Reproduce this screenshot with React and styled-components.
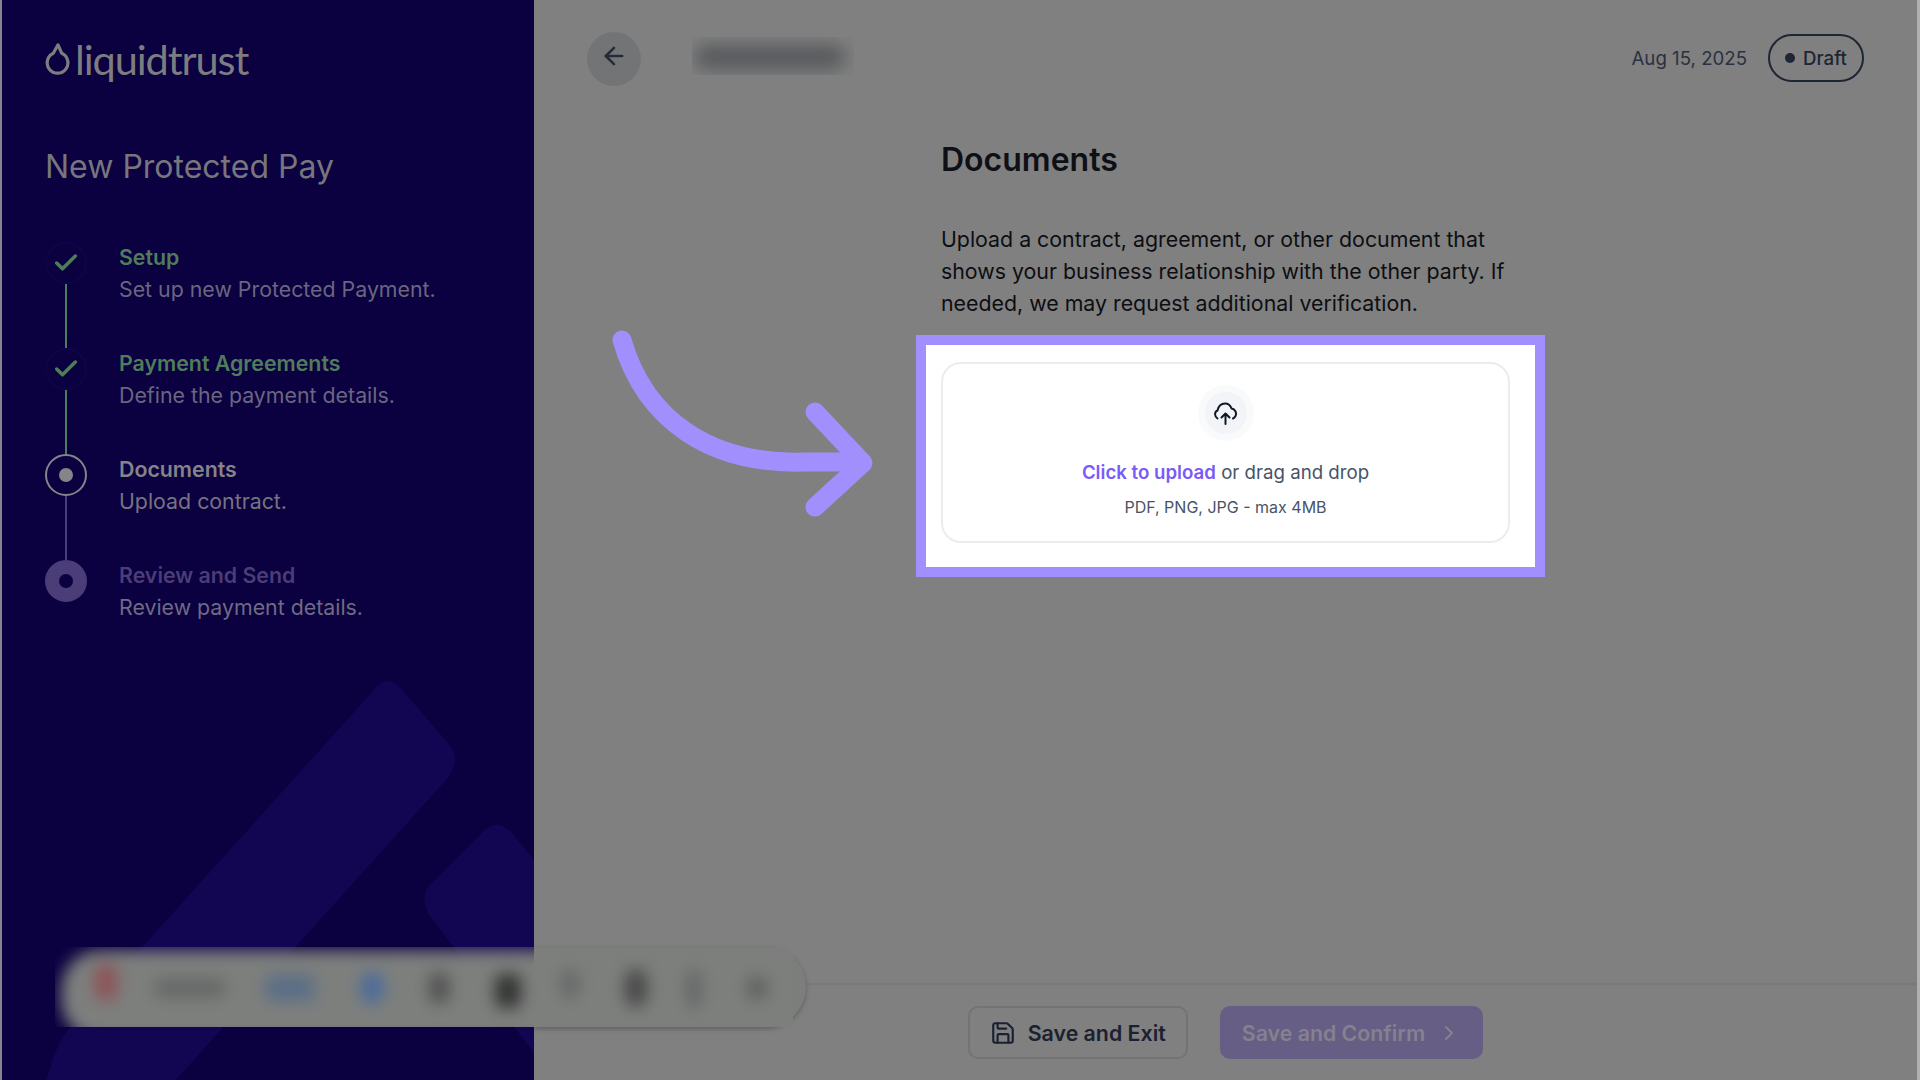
import React from 'react'
import styled, { createGlobalStyle } from 'styled-components'
import { ArrowLeft, Check, ChevronRight, Save } from 'lucide-react'

const GlobalStyle = createGlobalStyle`
  html, body {
    margin: 0;
    padding: 0;
    background: #808080;
    font-family: Inter, "Liberation Sans", sans-serif;
    overflow: hidden;
  }
  * { box-sizing: border-box; }
`

const UI = {
  Page: styled.div`
    position: relative;
    display: flex;
    width: 1920px;
    height: 1080px;
    border-left: 2px solid #85858c;
    border-right: 3px solid #b0b0b0;
    overflow: hidden;
    background: #808080;
  `,
  Sidebar: styled.aside`
    position: relative;
    flex: 0 0 532px;
    height: 100%;
    padding: 36px 0 0 43px;
    background: #0b0040;
    overflow: hidden;
  `,
  Shapes: styled.svg`
    position: absolute;
    left: -2px;
    top: 0;
  `,
  Logo: styled.div`
    position: relative;
    display: flex;
    align-items: center;
    gap: 3px;
    height: 46px;
    color: #7d7d7f;
    font-family: Lato, sans-serif;
    font-size: 41.5px;
    font-weight: 400;
    letter-spacing: -1.1px;
  `,
  SideTitle: styled.h2`
    position: relative;
    margin: 65px 0 0;
    color: #76767c;
    font-size: 32px;
    line-height: 40px;
    font-weight: 400;
  `,
  Steps: styled.div`
    position: relative;
    display: flex;
    flex-direction: column;
    margin-top: 55px;
  `,
  Step: styled.div`
    display: flex;
    gap: 32px;
    height: 106px;
  `,
  Marker: styled.div`
    display: flex;
    flex: 0 0 42px;
    flex-direction: column;
    align-items: center;
  `,
  Circle: styled.div`
    display: flex;
    flex: 0 0 42px;
    width: 42px;
    align-items: center;
    justify-content: center;
    border-radius: 50%;
    border: 2px solid ${p => p.$ring};
    background: ${p => p.$fill};
    color: #4f7d5c;
  `,
  Dot: styled.div`
    width: 14px;
    height: 14px;
    border-radius: 50%;
    background: ${p => p.$color};
  `,
  Connector: styled.div`
    flex: 1;
    width: 2px;
    background: ${p => p.$color};
  `,
  StepText: styled.div`
    margin-top: -1px;
  `,
  StepTitle: styled.div`
    color: ${p => p.$color};
    font-size: 21.33px;
    line-height: 32px;
    font-weight: 600;
  `,
  StepDesc: styled.div`
    color: ${p => p.$color};
    font-size: 21.33px;
    line-height: 32px;
    font-weight: 400;
  `,
  Main: styled.main`
    display: flex;
    flex: 1;
    flex-direction: column;
    height: 100%;
  `,
  Header: styled.header`
    display: flex;
    flex: 0 0 116px;
    align-items: flex-start;
    padding: 32px 53px 0 53px;
  `,
  BackButton: styled.div`
    display: flex;
    width: 54px;
    height: 54px;
    padding-bottom: 6px;
    align-items: center;
    justify-content: center;
    border-radius: 50%;
    background: #737476;
    color: #252b38;
  `,
  BlurClip: styled.div`
    width: 162px;
    height: 38px;
    margin: 5px 0 0 51px;
    overflow: hidden;
  `,
  BlurTitle: styled.div`
    width: 150px;
    height: 24px;
    margin: 8px 0 0 3px;
    border-radius: 10px;
    background: #56585b;
    filter: blur(9px);
  `,
  HeaderRight: styled.div`
    display: flex;
    align-items: center;
    gap: 21px;
    margin: 2px 0 0 auto;
  `,
  Date: styled.div`
    color: #2b3140;
    font-size: 18.67px;
  `,
  Badge: styled.div`
    display: flex;
    width: 96px;
    height: 48px;
    align-items: center;
    justify-content: center;
    gap: 8px;
    border: 2px solid #1e2533;
    border-radius: 24px;
    color: #1e2533;
    font-size: 18.67px;
    font-weight: 500;
  `,
  BadgeDot: styled.span`
    width: 10px;
    height: 10px;
    border-radius: 50%;
    background: #1e2533;
  `,
  Content: styled.section`
    flex: 1;
    width: 569px;
    margin: 0 auto;
  `,
  Title: styled.h1`
    margin: 21px 0 0;
    color: #0e1016;
    font-size: 32px;
    line-height: 46px;
    font-weight: 600;
  `,
  Body: styled.p`
    margin: 40px 0 0;
    width: 570px;
    color: #0d0e12;
    font-size: 21.33px;
    line-height: 32px;
  `,
  Frame: styled.div`
    width: 629px;
    height: 242px;
    margin: 16px 0 0 -25px;
    padding: 17px 25px 24px 15px;
    border: 10px solid #a08ffd;
    background: #fff;
  `,
  Drop: styled.div`
    display: flex;
    flex-direction: column;
    align-items: center;
    height: 181px;
    padding-top: 21px;
    border: 2px solid #eaecf0;
    border-radius: 20px;
    background: #fff;
  `,
  IconRing: styled.div`
    display: flex;
    width: 56px;
    height: 56px;
    align-items: center;
    justify-content: center;
    border-radius: 50%;
    background: #f9fafb;
  `,
  IconInner: styled.div`
    display: flex;
    width: 42px;
    height: 42px;
    align-items: center;
    justify-content: center;
    border-radius: 50%;
    background: #f2f4f7;
    color: #101828;
  `,
  DropLine: styled.div`
    margin-top: 16px;
    color: #475467;
    font-size: 18.67px;
    line-height: 32px;
  `,
  Link: styled.span`
    color: #7a5af8;
    font-weight: 600;
  `,
  DropHint: styled.div`
    margin-top: 6px;
    color: #475467;
    font-size: 16px;
    line-height: 24px;
  `,
  Footer: styled.footer`
    display: flex;
    flex: 0 0 97px;
    align-items: flex-start;
    justify-content: center;
    gap: 32px;
    padding-top: 21px;
    border-top: 2px solid #797979;
  `,
  Button: styled.div`
    display: flex;
    height: 53px;
    align-items: center;
    gap: ${p => p.$gap}px;
    padding: 0 ${p => p.$pad}px;
    border: 2px solid ${p => p.$border};
    border-radius: 10px;
    background: ${p => p.$bg};
    color: ${p => p.$color};
    font-size: 21.33px;
    font-weight: 600;
  `,
  Arrow: styled.svg`
    position: absolute;
    left: -2px;
    top: 0;
    pointer-events: none;
  `,
  Toolbar: styled.div`
    position: absolute;
    left: 532px;
    top: 947px;
    width: 272px;
    height: 80px;
    border-radius: 0 40px 40px 0;
    background: #7c7e7c;
    box-shadow: 0 2px 5px rgba(0, 0, 0, 0.25);
  `,
  ToolbarBlur: styled.div`
    position: absolute;
    left: 53px;
    top: 947px;
    width: 738px;
    height: 80px;
    overflow: hidden;
  `,
  ToolbarInner: styled.div`
    position: relative;
    width: 790px;
    height: 90px;
    margin-top: 3px;
    margin-left: 6px;
    border-radius: 40px;
    background: #7d7f7d;
    filter: blur(8px);
  `,
  Blob: styled.div`
    position: absolute;
    top: ${p => p.$top}px;
    left: ${p => p.$left}px;
    width: ${p => p.$w}px;
    height: ${p => p.$h}px;
    border-radius: 8px;
    background: ${p => p.$color};
  `,
}

const steps = [
  { title: 'Setup', desc: 'Set up new Protected Payment.', state: 'done' },
  { title: 'Payment Agreements', desc: 'Define the payment details.', state: 'done' },
  { title: 'Documents', desc: 'Upload contract.', state: 'current' },
  { title: 'Review and Send', desc: 'Review payment details.', state: 'todo' },
]

const blobs = [
  { left: 34, top: 14, w: 22, h: 36, color: '#8e5257' },
  { left: 93, top: 29, w: 72, h: 18, color: '#656766' },
  { left: 204, top: 25, w: 50, h: 26, color: '#5a6e86' },
  { left: 300, top: 23, w: 22, h: 30, color: '#4a6a9c' },
  { left: 368, top: 23, w: 20, h: 30, color: '#505150' },
  { left: 434, top: 24, w: 26, h: 34, color: '#333433' },
  { left: 500, top: 20, w: 18, h: 28, color: '#666867' },
  { left: 564, top: 20, w: 22, h: 36, color: '#484948' },
  { left: 626, top: 20, w: 14, h: 38, color: '#636564' },
  { left: 686, top: 27, w: 20, h: 22, color: '#5e605f' },
]

function StepMarker({ state }) {
  if (state === 'done') {
    return (
      <UI.Circle $ring="#0e0548" $fill="transparent">
        <Check size={28} strokeWidth={3} />
      </UI.Circle>
    )
  }
  if (state === 'current') {
    return (
      <UI.Circle $ring="#858488" $fill="transparent">
        <UI.Dot $color="#858488" />
      </UI.Circle>
    )
  }
  return (
    <UI.Circle $ring="#4a3d78" $fill="#4a3d78">
      <UI.Dot $color="#0b0040" />
    </UI.Circle>
  )
}

function UploadCloud() {
  return (
    <svg width="25" height="25" viewBox="0 0 25 25" fill="none" stroke="currentColor" strokeWidth="2" strokeLinecap="round" strokeLinejoin="round">
      <path d="M4.5 17.5C1.5 15.5 1 11 4.5 9.5C5.5 5 8.5 2.5 12 2.5C15.5 2.5 17.5 4.5 18.5 7.5C22.5 8 24 12.5 22.5 15C22 16 21 17 20 17.5" />
      <path d="M12.5 23V12.5M8.5 16.5L12.5 12.5L16.5 16.5" />
    </svg>
  )
}

const titleColors = { done: '#4f7d5c', current: '#858488', todo: '#4a3d78' }
const descColors = { done: '#6a6680', current: '#77737f', todo: '#6f6b82' }

function App() {
  return (
    <UI.Page>
      <GlobalStyle />
      <UI.Sidebar>
        <UI.Shapes width="536" height="1080" viewBox="0 0 536 1080">
          <path
            fill="#120552"
            d="M372 692 Q387 670 404 692 L449 744 Q462 760 447 779 L174 1082 L46 1082 Q55 1045 70 1027 Z"
          />
          <path
            fill="#120552"
            d="M479 836 Q495 815 512 833 L536 862 L536 1056 L430 916 Q420 900 428 887 Z"
          />
        </UI.Shapes>
        <UI.Logo>
          <svg width="27" height="34" viewBox="0 0 27 36" fill="none" stroke="#7d7d7f" strokeWidth="3.4">
            <path d="M13 3 L17 12 A11 11 0 1 1 8 12 Z" strokeLinejoin="round" />
          </svg>
          liquidtrust
        </UI.Logo>
        <UI.SideTitle>New Protected Pay</UI.SideTitle>
        <UI.Steps>
          {steps.map((step, i) => (
            <UI.Step key={step.title}>
              <UI.Marker>
                <StepMarker state={step.state} />
                {i < steps.length - 1 && (
                  <UI.Connector $color={step.state === 'done' ? '#4f7d5c' : '#4a3d78'} />
                )}
              </UI.Marker>
              <UI.StepText>
                <UI.StepTitle $color={titleColors[step.state]}>{step.title}</UI.StepTitle>
                <UI.StepDesc $color={descColors[step.state]}>{step.desc}</UI.StepDesc>
              </UI.StepText>
            </UI.Step>
          ))}
        </UI.Steps>
      </UI.Sidebar>

      <UI.Main>
        <UI.Header>
          <UI.BackButton>
            <ArrowLeft size={28} strokeWidth={2.2} />
          </UI.BackButton>
          <UI.BlurClip>
            <UI.BlurTitle />
          </UI.BlurClip>
          <UI.HeaderRight>
            <UI.Date>Aug 15, 2025</UI.Date>
            <UI.Badge>
              <UI.BadgeDot />
              Draft
            </UI.Badge>
          </UI.HeaderRight>
        </UI.Header>

        <UI.Content>
          <UI.Title>Documents</UI.Title>
          <UI.Body>
            Upload a contract, agreement, or other document that shows your business
            relationship with the other party. If needed, we may request additional
            verification.
          </UI.Body>
          <UI.Frame>
            <UI.Drop>
              <UI.IconRing>
                <UI.IconInner>
                  <UploadCloud />
                </UI.IconInner>
              </UI.IconRing>
              <UI.DropLine>
                <UI.Link>Click to upload</UI.Link> or drag and drop
              </UI.DropLine>
              <UI.DropHint>PDF, PNG, JPG - max 4MB</UI.DropHint>
            </UI.Drop>
          </UI.Frame>
        </UI.Content>

        <UI.Footer>
          <UI.Button $border="#737373" $bg="transparent" $color="#1b2130" $gap={12} $pad={20}>
            <Save size={26} strokeWidth={2} />
            Save and Exit
          </UI.Button>
          <UI.Button $border="#665e84" $bg="#665e84" $color="#85818f" $gap={12} $pad={20}>
            Save and Confirm
            <ChevronRight size={24} strokeWidth={2} />
          </UI.Button>
        </UI.Footer>
      </UI.Main>

      <UI.Arrow width="1920" height="1080" viewBox="0 0 1920 1080" fill="none" stroke="#a08ffd" strokeWidth="19" strokeLinecap="round" strokeLinejoin="round">
        <path d="M622 340 C 645 420 710 465 805 462 L 862 462" />
        <path d="M815 412 L 863 463 L 815 507" />
      </UI.Arrow>

      <UI.Toolbar />
      <UI.ToolbarBlur>
        <UI.ToolbarInner>
          {blobs.map(blob => (
            <UI.Blob key={blob.left} $left={blob.left} $top={blob.top} $w={blob.w} $h={blob.h} $color={blob.color} />
          ))}
        </UI.ToolbarInner>
      </UI.ToolbarBlur>
    </UI.Page>
  )
}

export default App
